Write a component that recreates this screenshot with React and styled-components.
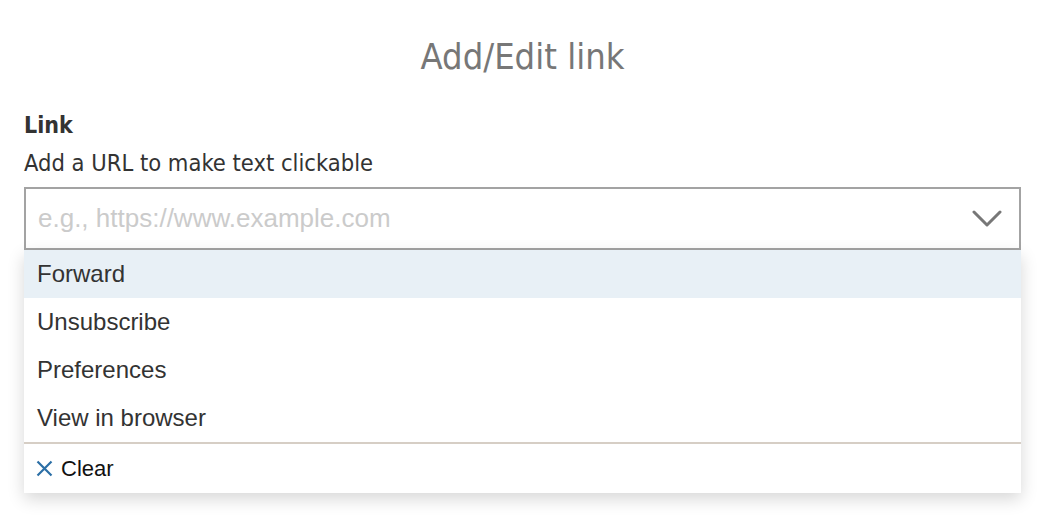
import React from 'react';
import styled, { createGlobalStyle } from 'styled-components';

const GlobalStyle = createGlobalStyle`
  html, body {
    margin: 0;
    padding: 0;
    background: #ffffff;
  }
`;

const Page = styled.div`
  box-sizing: border-box;
  width: 1044px;
  height: 528px;
  padding: 35px 23px 0 24px;
  overflow: hidden;
`;

const Title = styled.h2`
  margin: 0 0 33px;
  text-align: center;
  font-family: 'DejaVu Sans Condensed', 'DejaVu Sans', sans-serif;
  font-stretch: condensed;
  font-weight: 400;
  font-size: 36px;
  line-height: 44px;
  color: #777777;
`;

const FieldLabel = styled.div`
  font-family: 'DejaVu Sans Condensed', 'DejaVu Sans', sans-serif;
  font-stretch: condensed;
  font-weight: 700;
  font-size: 23px;
  line-height: 26px;
  color: #333333;
  margin-bottom: 12px;
`;

const FieldHint = styled.div`
  font-family: 'DejaVu Sans Condensed', 'DejaVu Sans', sans-serif;
  font-stretch: condensed;
  font-size: 23.5px;
  line-height: 26px;
  color: #333333;
  margin-bottom: 11px;
`;

const Combo = styled.div`
  position: relative;
`;

const InputBox = styled.div`
  box-sizing: border-box;
  display: flex;
  align-items: center;
  height: 63px;
  border: 2px solid #a3a3a3;
  padding: 0 17px 0 12px;
  background: #ffffff;
`;

const Input = styled.input`
  flex: 1;
  border: 0;
  padding: 0;
  outline: none;
  background: transparent;
  font-family: 'Liberation Sans', Arial, sans-serif;
  font-size: 26px;
  color: #333333;

  &::placeholder {
    color: #cbcbcb;
  }
`;

const Chevron = styled.svg`
  width: 30px;
  height: 18px;
  flex: none;
`;

const Menu = styled.ul`
  list-style: none;
  margin: 0;
  padding: 0;
  background: #ffffff;
  box-shadow: 0 6px 16px rgba(0, 0, 0, 0.16);
`;

const Option = styled.li`
  box-sizing: border-box;
  height: 48px;
  display: flex;
  align-items: center;
  padding: 0 13px;
  font-family: 'Liberation Sans', Arial, sans-serif;
  font-size: 24px;
  color: #333333;
  background: ${(p) => (p.$active ? '#e8f0f6' : '#ffffff')};
`;

const ClearRow = styled.li`
  box-sizing: border-box;
  height: 51px;
  display: flex;
  align-items: center;
  gap: 8px;
  padding: 0 12px;
  border-top: 2px solid #d6cec5;
  font-family: 'Liberation Sans', Arial, sans-serif;
  font-size: 22px;
  color: #111111;
`;

const ClearIcon = styled.svg`
  width: 17px;
  height: 17px;
  flex: none;
`;

const options = ['Forward', 'Unsubscribe', 'Preferences', 'View in browser'];

function App() {
  return (
    <>
      <GlobalStyle />
      <Page>
        <Title>Add/Edit link</Title>
        <FieldLabel>Link</FieldLabel>
        <FieldHint>Add a URL to make text clickable</FieldHint>
        <Combo>
          <InputBox>
            <Input placeholder="e.g., https://www.example.com" />
            <Chevron viewBox="0 0 30 18">
              <path
                d="M2 2 L15 15 L28 2"
                fill="none"
                stroke="#777777"
                strokeWidth="3"
                strokeLinecap="round"
                strokeLinejoin="round"
              />
            </Chevron>
          </InputBox>
          <Menu>
            {options.map((item, index) => (
              <Option key={item} $active={index === 0}>
                {item}
              </Option>
            ))}
            <ClearRow>
              <ClearIcon viewBox="0 0 17 17">
                <path
                  d="M1.5 1.5 L15.5 15.5 M15.5 1.5 L1.5 15.5"
                  stroke="#2c6fa6"
                  strokeWidth="2.2"
                />
              </ClearIcon>
              Clear
            </ClearRow>
          </Menu>
        </Combo>
      </Page>
    </>
  );
}

export default App;
